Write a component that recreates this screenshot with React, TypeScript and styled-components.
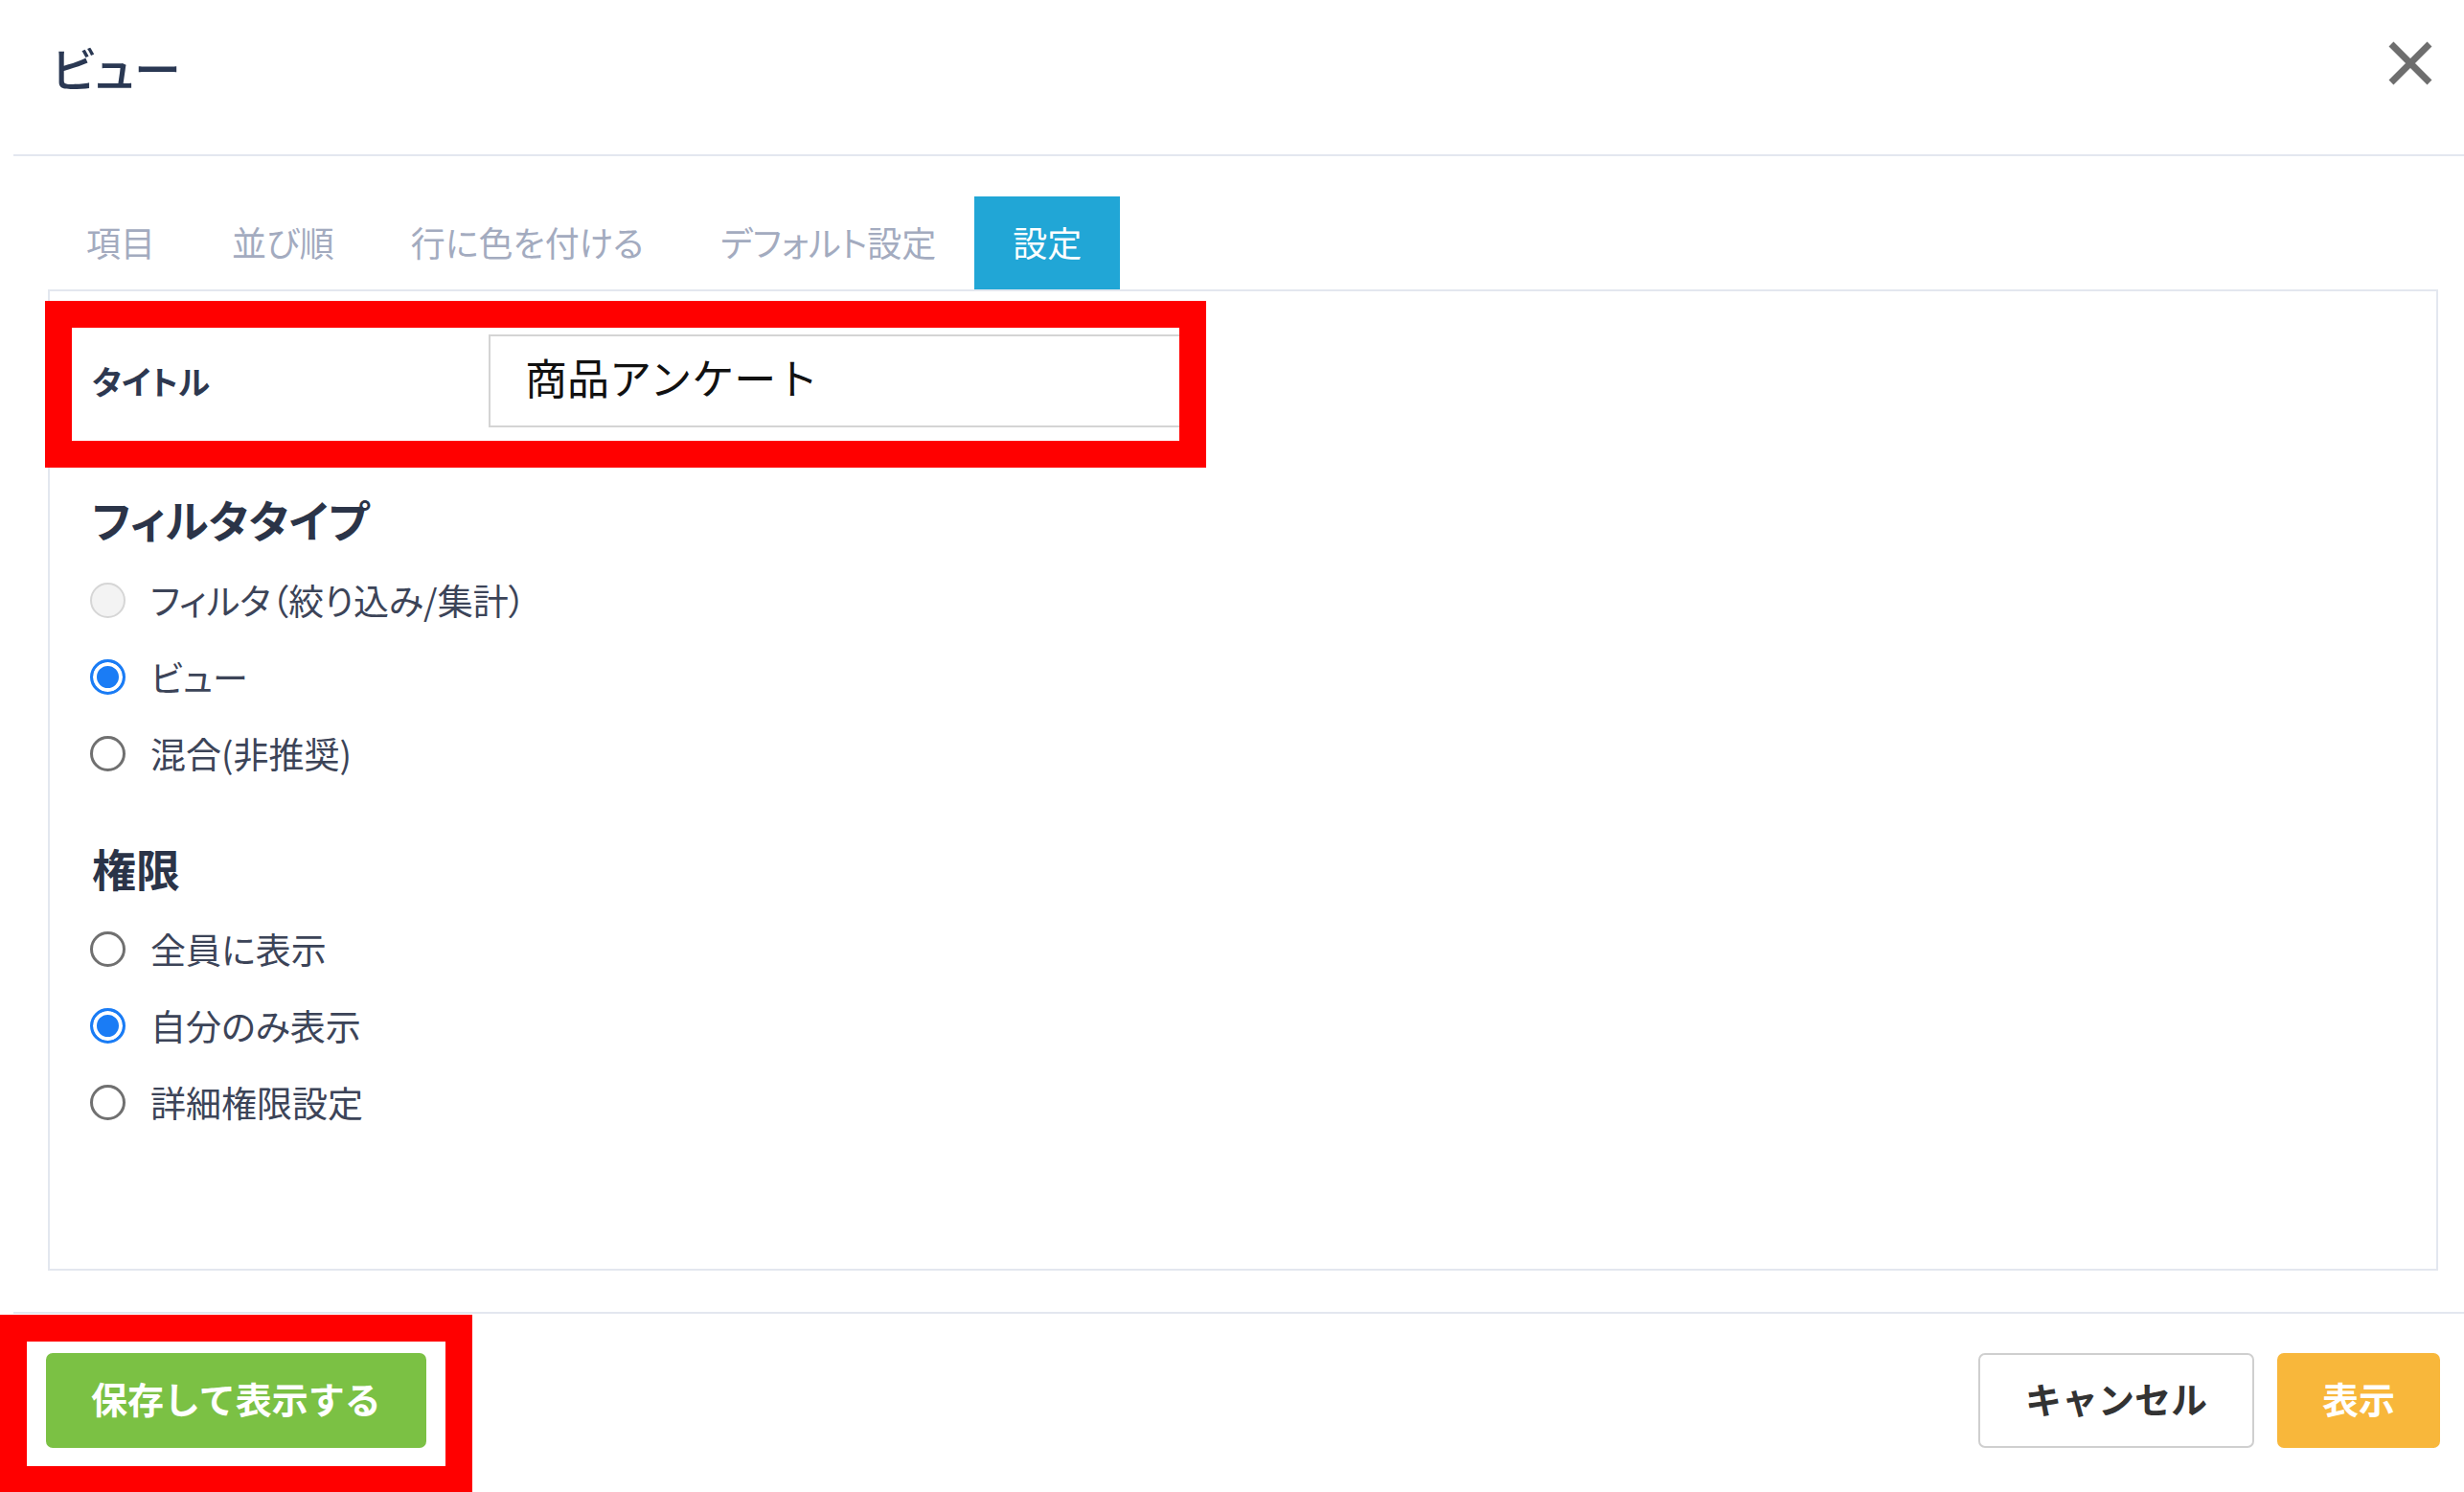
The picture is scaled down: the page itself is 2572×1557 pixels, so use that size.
import React from 'react'
import styled, { createGlobalStyle } from 'styled-components'

const GlobalStyle = createGlobalStyle`
  html {
    overflow: hidden;
  }
  html, body {
    margin: 0;
    padding: 0;
    background: #fff;
  }
  body {
    min-height: 100vh;
    font-family: "Noto Sans CJK JP", "Noto Sans", sans-serif;
  }
`

const Modal = styled.div`
  margin-left: 14px;
  width: calc(100% - 14px);
`
const Header = styled.header`
  display: flex;
  justify-content: space-between;
  align-items: flex-start;
  height: 163px;
  box-sizing: border-box;
  padding: 38px 32px 0 40px;
  border-bottom: 2px solid #e3e7ef;
`
const Title = styled.h1`
  margin: 0;
  font-size: 49px;
  line-height: 64px;
  font-weight: 500;
  color: #2a3853;
  font-feature-settings: "palt";
`
const CloseButton = styled.button`
  width: 48px;
  height: 46px;
  margin-top: 5px;
  padding: 0;
  border: 0;
  background: none;
  cursor: pointer;
`
const Body = styled.div`
  padding: 42px 27px 43px 36px;
  border-bottom: 2px solid #e3e7ef;
`
const TabBar = styled.div`
  display: flex;
`
const Tab = styled.button<{ $active?: boolean }>`
  height: 97px;
  padding: 0 40px 3px;
  border: 0;
  background: ${({ $active }) => ($active ? '#21a6d6' : 'transparent')};
  color: ${({ $active }) => ($active ? '#fff' : '#a3abbf')};
  font-family: inherit;
  font-size: 36px;
  font-feature-settings: "palt";
  cursor: pointer;
`
const Panel = styled.div`
  min-height: 1024px;
  box-sizing: border-box;
  padding: 45px 44px 0 44px;
  border: 2px solid #e3e7ef;
`
const FieldRow = styled.div`
  position: relative;
  display: flex;
  align-items: center;
  height: 97px;
  margin-bottom: 66px;
`
const FieldLabel = styled.label`
  width: 414px;
  flex-shrink: 0;
  font-size: 34px;
  font-weight: 700;
  color: #2d3850;
  font-feature-settings: "palt";
`
const TextInput = styled.input`
  width: 735px;
  height: 97px;
  box-sizing: border-box;
  padding: 0 36px 10px;
  border: 2px solid #d4d4d4;
  font-family: inherit;
  font-size: 44px;
  color: #111;
  outline: none;
`
// red annotation frame drawn over the screenshot
const Highlight = styled.div<{ $left: number; $top: number; $w: number; $h: number }>`
  position: absolute;
  left: ${({ $left }) => $left}px;
  top: ${({ $top }) => $top}px;
  width: ${({ $w }) => $w}px;
  height: ${({ $h }) => $h}px;
  box-sizing: border-box;
  border: 28px solid #ff0000;
  pointer-events: none;
`
const Section = styled.section`
  & + & {
    margin-top: 50px;
  }
`
const SectionTitle = styled.h2`
  margin: 0 0 16px;
  font-size: 46px;
  line-height: 58px;
  font-weight: 700;
  color: #2b3448;
  font-feature-settings: "palt";
`
const RadioItem = styled.label`
  display: flex;
  align-items: center;
  gap: 26px;
  height: 80px;
  margin-left: -2px;
  font-size: 37px;
  color: #3c4458;
  font-feature-settings: "palt";
`
const RadioInput = styled.input.attrs({ type: 'radio' })`
  appearance: none;
  flex-shrink: 0;
  width: 37px;
  height: 37px;
  margin: 0;
  box-sizing: border-box;
  border-radius: 50%;
  border: 3px solid #707070;
  background: #fff;

  &:checked {
    border-color: #1a7cf5;
    background: #1a7cf5;
    box-shadow: inset 0 0 0 4px #fff;
  }
  &:disabled {
    border: 2px solid #d6d6d6;
    background: #f3f3f3;
  }
`
const Footer = styled.footer`
  position: relative;
  display: flex;
  justify-content: space-between;
  align-items: center;
  padding: 41px 25px 0 34px;
`
const ButtonGroup = styled.div`
  display: flex;
  gap: 24px;
`
const Button = styled.button<{ $variant: 'save' | 'cancel' | 'show' }>`
  height: 99px;
  padding: 0 47px 6px;
  border-radius: 7px;
  border: ${({ $variant }) => ($variant === 'cancel' ? '2px solid #cfcfcf' : '0')};
  background: ${({ $variant }) =>
    $variant === 'save' ? '#7bc144' : $variant === 'show' ? '#f8b73b' : '#fff'};
  color: ${({ $variant }) => ($variant === 'cancel' ? '#333' : '#fff')};
  font-family: inherit;
  font-size: 38px;
  font-weight: 700;
  cursor: pointer;
`

const filterTypes = [
  { label: 'フィルタ（絞り込み/集計）', disabled: true },
  { label: 'ビュー', checked: true },
  { label: '混合(非推奨)' },
]
const permissions = [
  { label: '全員に表示' },
  { label: '自分のみ表示', checked: true },
  { label: '詳細権限設定' },
]
const tabs = ['項目', '並び順', '行に色を付ける', 'デフォルト設定', '設定']

export default function App() {
  return (
    <>
      <GlobalStyle />
      <Modal>
        <Header>
          <Title>ビュー</Title>
          <CloseButton aria-label="閉じる">
            <svg width="48" height="46" viewBox="0 0 48 46">
              <path d="M4 3 L44 43 M44 3 L4 43" stroke="#6e6e6e" strokeWidth="7" fill="none" />
            </svg>
          </CloseButton>
        </Header>
        <Body>
          <TabBar>
            {tabs.map((t) => (
              <Tab key={t} $active={t === '設定'}>{t}</Tab>
            ))}
          </TabBar>
          <Panel>
            <FieldRow>
              <FieldLabel>タイトル</FieldLabel>
              <TextInput defaultValue="商品アンケート" />
              <Highlight $left={-49} $top={-35} $w={1212} $h={174} />
            </FieldRow>
            <Section>
              <SectionTitle>フィルタタイプ</SectionTitle>
              {filterTypes.map((o) => (
                <RadioItem key={o.label}>
                  <RadioInput name="filterType" defaultChecked={o.checked} disabled={o.disabled} />
                  {o.label}
                </RadioItem>
              ))}
            </Section>
            <Section>
              <SectionTitle>権限</SectionTitle>
              {permissions.map((o) => (
                <RadioItem key={o.label}>
                  <RadioInput name="permission" defaultChecked={o.checked} />
                  {o.label}
                </RadioItem>
              ))}
            </Section>
          </Panel>
        </Body>
        <Footer>
          <Button $variant="save">保存して表示する</Button>
          <ButtonGroup>
            <Button $variant="cancel">キャンセル</Button>
            <Button $variant="show">表示</Button>
          </ButtonGroup>
          <Highlight $left={-14} $top={1} $w={493} $h={186} />
        </Footer>
      </Modal>
    </>
  )
}
